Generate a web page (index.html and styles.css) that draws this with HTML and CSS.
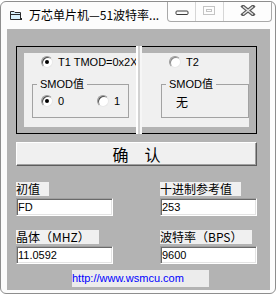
FILE: index.html
```html
<!DOCTYPE html>
<html>
  <head>
    <meta charset="utf-8">
    <title>万芯单片机—51波特率计算器</title>
    <link rel="stylesheet" href="styles.css">
  </head>
  <body>
    <div class="window">
      <!-- title bar -->
      <div class="titlebar">
        <svg class="app-icon" width="12" height="11" viewBox="0 0 12 11">
          <path d="M0.5 1.5 H4 L5 2.5 H10.5 V9.5 H0.5 Z" fill="#d8f0fa" stroke="#2a2a2a"/>
          <path d="M0.5 4.5 H10.5" stroke="#2a2a2a"/>
          <rect x="10" y="8" width="2" height="2" fill="#2a2a2a"/>
        </svg>
        <span class="title">万芯单片机—51波特率...</span>
        <div class="caption-btns">
          <span class="cap cap-min">
            <svg width="14" height="6" viewBox="0 0 14 6"><rect x="1" y="1" width="12" height="3.5" rx="1" fill="#fafafa" stroke="#3a3a3a"/></svg>
          </span>
          <span class="cap cap-max">
            <svg width="13" height="10" viewBox="0 0 13 10"><rect x="0.5" y="0.5" width="11" height="8" fill="none" stroke="#c4c4c4"/><rect x="3.5" y="3.5" width="5" height="2" fill="none" stroke="#c4c4c4"/></svg>
          </span>
          <span class="cap cap-close">
            <svg width="16" height="11" viewBox="0 0 16 11"><path d="M3 1.5 L13 9.5 M13 1.5 L3 9.5" stroke="#5a5a5a" stroke-width="3.6" stroke-linecap="square"/><path d="M3 1.5 L13 9.5 M13 1.5 L3 9.5" stroke="#e6e6e6" stroke-width="1.4"/></svg>
          </span>
        </div>
      </div>

      <div class="frame">
        <div class="client">
          <!-- timer choice -->
          <div class="timer-box">
            <div class="side side-left">
              <div class="panel">
                <div class="opt opt-top"><span class="radio on"></span>T1 TMOD=0x2X</div>
                <fieldset class="group group-left">
                  <legend>SMOD值</legend>
                  <div class="opts">
                    <div class="opt opt-first"><span class="radio on"></span>0</div>
                    <div class="opt"><span class="radio"></span>1</div>
                  </div>
                </fieldset>
              </div>
            </div>
            <div class="splitter"></div>
            <div class="side side-right">
              <div class="panel panel-right">
                <div class="opt opt-top"><span class="radio off"></span>T2</div>
                <fieldset class="group group-right">
                  <legend>SMOD值</legend>
                  <div class="none">无</div>
                </fieldset>
              </div>
            </div>
          </div>

          <button class="ok">确　认</button>

          <!-- values -->
          <div class="fields">
            <div class="field">
              <span class="label">初值</span>
              <input class="edit" type="text" value="FD">
            </div>
            <div class="field">
              <span class="label">十进制参考值</span>
              <input class="edit" type="text" value="253">
            </div>
            <div class="field">
              <span class="label">晶体（MHZ）</span>
              <input class="edit" type="text" value="11.0592">
            </div>
            <div class="field">
              <span class="label">波特率（BPS）</span>
              <input class="edit" type="text" value="9600">
            </div>
          </div>

          <div class="link">http://www.wsmcu.com</div>
        </div>
      </div>
    </div>
  </body>
</html>
```

FILE: styles.css
```css
body {
  margin: 0;
  background: #ffffff;
  font-family: 'Liberation Sans', 'Noto Sans CJK SC', sans-serif;
  font-size: 11px;
  color: #000000;
}

.window {
  width: 276px;
  height: 293px;
  margin-top: 1px;
  box-sizing: border-box;
  border: 1px solid #8e8e8e;
  border-radius: 6px;
  background: #fcfcfc;
  overflow: hidden;
}

/* title bar */
.titlebar {
  height: 27px;
  display: flex;
  align-items: flex-start;
}

.app-icon {
  margin: 8px 0 0 9px;
}

.title {
  margin: 4px 0 0 7px;
  font-family: 'Noto Sans CJK SC', sans-serif;
  font-size: 12px;
  line-height: 17px;
  white-space: nowrap;
}

.caption-btns {
  display: flex;
  margin-left: auto;
  margin-right: 3px;
  height: 19px;
  border: 1px solid #a9a9a9;
  border-top: none;
  border-radius: 0 0 4px 4px;
  background: #fdfdfd;
}

.cap {
  display: flex;
  align-items: center;
  justify-content: center;
}

.cap-min {
  width: 27px;
  border-right: 1px solid #d6d6d6;
  padding-top: 3px;
}

.cap-max {
  width: 27px;
  border-right: 1px solid #d6d6d6;
  padding-bottom: 2px;
}

.cap-close {
  width: 47px;
  padding-bottom: 2px;
}

/* window body */
.frame {
  padding: 0 5px 0 6px;
}

.client {
  height: 261px;
  box-sizing: border-box;
  padding: 17px 0 0 9px;
  background: #b3b3b3;
}

.timer-box {
  display: flex;
  height: 88px;
}

.side {
  border: 1px solid #000000;
  padding: 6px 0;
}

.side-left {
  border-right: none;
  padding-left: 7px;
}

.side-right {
  border-left: none;
  padding-right: 7px;
}

.splitter {
  width: 6px;
  background: linear-gradient(to right, #ffffff 0 2px, #d2d2d2 2px 4px, #f6f6f6 4px);
}

.panel {
  width: 112px;
  height: 74px;
  box-sizing: border-box;
  padding-left: 17px;
  background: #f0f0f0;
  overflow: hidden;
}

.panel-right {
  width: 107px;
  padding-left: 27px;
}

.opt {
  display: flex;
  align-items: center;
  height: 18px;
  white-space: nowrap;
}

.radio {
  width: 12px;
  height: 12px;
  box-sizing: border-box;
  margin-right: 5px;
  border-radius: 50%;
  border: 1px solid;
  border-color: #9a9a9a #e8e8e8 #e8e8e8 #9a9a9a;
  box-shadow: inset 1px 1px #505050;
  background: #ffffff;
  display: flex;
  align-items: center;
  justify-content: center;
  flex-shrink: 0;
}

.radio.on::after {
  content: '';
  width: 4px;
  height: 4px;
  border-radius: 50%;
  background: #000000;
}

.radio.off {
  box-shadow: inset 1px 1px #8a8a8a;
}

.group {
  margin: 6px 0 0 0;
  padding: 1px 0 7px 8px;
  border: 1px solid #a2a2a2;
  min-width: 0;
  box-sizing: border-box;
}

.group legend {
  margin-left: -4px;
  padding: 0 3px;
  line-height: 14px;
  font-size: 11px;
}

.group-left {
  width: 97px;
  margin-left: -9px;
}

.group-right {
  width: 88px;
  margin-left: -8px;
}

.opts {
  display: flex;
}

.opt-first {
  width: 56px;
}

.none {
  height: 18px;
  padding: 2px 0 0 6px;
  box-sizing: border-box;
  font-family: 'Noto Sans CJK SC', sans-serif;
  font-size: 12px;
  line-height: 16px;
}

/* confirm button */
.ok {
  display: block;
  width: 241px;
  height: 24px;
  margin-top: 8px;
  padding: 0;
  font-family: 'Noto Sans CJK SC', sans-serif;
  font-size: 16px;
  line-height: 20px;
  color: #000000;
  background: #f0f0f0;
  border: 1px solid;
  border-color: #ffffff #5c5c5c #5c5c5c #ffffff;
  box-shadow: inset -1px -1px #a0a0a0;
}

/* label + edit pairs */
.fields {
  display: grid;
  grid-template-columns: 97px 97px;
  column-gap: 47px;
  row-gap: 14px;
  margin-top: 16px;
}

.field {
  display: flex;
  flex-direction: column;
  align-items: flex-start;
}

.label {
  height: 14px;
  padding-right: 9px;
  margin-bottom: 2px;
  font-family: 'Noto Sans CJK SC', sans-serif;
  font-size: 12px;
  line-height: 14px;
  background: #f0f0f0;
  white-space: nowrap;
}

.edit {
  width: 97px;
  height: 18px;
  box-sizing: border-box;
  margin: 0;
  padding: 0 0 0 1px;
  font-family: 'Liberation Sans', sans-serif;
  font-size: 11px;
  color: #000000;
  background: #ffffff;
  border: 1px solid;
  border-color: #a0a0a0 #ffffff #ffffff #a0a0a0;
  box-shadow: inset 1px 1px #6a6a6a, inset -1px -1px #e3e3e3;
  outline: none;
}

.link {
  width: 137px;
  height: 17px;
  margin: 6px 0 0 56px;
  font-size: 11px;
  line-height: 17px;
  color: #0000ff;
  background: #ececec;
}
```
